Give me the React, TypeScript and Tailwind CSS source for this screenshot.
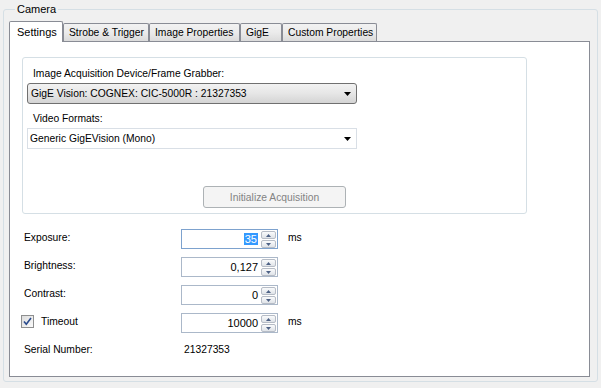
import type { ReactNode } from 'react'

const tabs = ['Settings', 'Strobe & Trigger', 'Image Properties', 'GigE', 'Custom Properties']
const tabWidths = ['w-[54px]', 'w-[86px]', 'w-[91px]', 'w-[42px]', 'w-[95px]']

function Arrow() {
  return (
    <svg width="7" height="4" viewBox="0 0 7 4" className="shrink-0">
      <path d="M0 0h7L3.5 4z" fill="#000" />
    </svg>
  )
}

function Spinner() {
  return (
    <div className="flex flex-col gap-px w-[15px] h-[17px] mt-px mr-px">
      <div className="flex-1 flex items-center justify-center border border-[#b6bcc6] rounded-[2px] bg-gradient-to-b from-[#fafbfc] to-[#dfe3e8]">
        <svg width="5" height="3" viewBox="0 0 5 3">
          <path d="M2.5 0L5 3H0z" fill="#4d6185" />
        </svg>
      </div>
      <div className="flex-1 flex items-center justify-center border border-[#b6bcc6] rounded-[2px] bg-gradient-to-b from-[#fafbfc] to-[#dfe3e8]">
        <svg width="5" height="3" viewBox="0 0 5 3">
          <path d="M0 0h5L2.5 3z" fill="#4d6185" />
        </svg>
      </div>
    </div>
  )
}

function NumBox({ value, focused }: { value: ReactNode; focused?: boolean }) {
  return (
    <div
      className={
        'w-[97px] h-[20px] flex items-start justify-end bg-white border ' +
        (focused ? 'border-[#7da2ce]' : 'border-[#abb8c9]')
      }
    >
      <span className="h-[18px] leading-[18px] pr-[3px] text-[11px]">{value}</span>
      <Spinner />
    </div>
  )
}

function Row({ label, children, unit }: { label: ReactNode; children: ReactNode; unit?: string }) {
  return (
    <div className="flex items-start h-[20px]">
      <div className="w-[157px] pt-[2px]">{label}</div>
      {children}
      {unit && <span className="ml-[10px] pt-[2px]">{unit}</span>}
    </div>
  )
}

export default function App() {
  return (
    <div className="w-[601px] h-[388px] bg-[#f0f0f0] font-['Liberation_Sans',Arial,sans-serif] text-[10.3px] leading-[13px] text-black pt-[2px] pl-[3px] whitespace-nowrap">
      <fieldset className="w-[595px] h-[380px] border border-[#d5dfe5] rounded-[3px] px-[5px]">
        <legend className="ml-[6px] px-[2px] leading-[14px] text-[11px]">Camera</legend>

        <div className="flex items-end h-[20px] mt-[5px]">
          {tabs.map((t, i) =>
            i === 0 ? (
              <div
                key={t}
                className={`${tabWidths[i]} h-[21px] -mb-px relative z-10 bg-white border border-b-0 border-[#898c95] rounded-t-[2px] pl-[7px] pt-[4px] text-[11px]`}
              >
                {t}
              </div>
            ) : (
              <div
                key={t}
                className={`${tabWidths[i]} h-[18px] bg-gradient-to-b from-[#f2f2f2] via-[#ebebeb] to-[#dbdbdb] border border-b-0 border-[#898c95] rounded-t-[2px] pl-[5px] pt-[2px]`}
              >
                {t}
              </div>
            )
          )}
        </div>

        <div className="w-[581px] h-[336px] bg-white border border-[#898c95]">
          <div className="ml-[12px] mt-[15px] w-[505px] h-[157px] border border-[#d5dfe5] rounded-[3px] pl-[4px] pt-[9px]">
            <div className="ml-[6px]">Image Acquisition Device/Frame Grabber:</div>
            <div className="mt-[3px] w-[330px] h-[21px] flex items-center justify-between border border-[#707070] rounded-[3px] bg-gradient-to-b from-[#f2f2f2] via-[#e6e6e6] to-[#d4d4d4] pl-[3px] pr-[5px]">
              <span>GigE Vision: COGNEX: CIC-5000R : 21327353</span>
              <Arrow />
            </div>
            <div className="ml-[6px] mt-[8px]">Video Formats:</div>
            <div className="mt-[3px] w-[330px] h-[21px] flex items-center justify-between border border-[#d9dfe6] bg-white pl-[2px] pr-[5px]">
              <span>Generic GigEVision (Mono)</span>
              <Arrow />
            </div>
            <div className="flex justify-center mt-[37px] pr-[4px]">
              <div className="w-[143px] h-[22px] flex items-center justify-center border border-[#adb2b5] rounded-[3px] bg-[#f4f4f4] text-[#838383]">
                Initialize Acquisition
              </div>
            </div>
          </div>

          <div className="flex flex-col gap-[8px] mt-[15px] pl-[14px]">
            <Row label="Exposure:" unit="ms">
              <NumBox focused value={<span className="bg-[#3399ff] text-white px-px">35</span>} />
            </Row>
            <Row label="Brightness:">
              <NumBox value="0,127" />
            </Row>
            <Row label="Contrast:">
              <NumBox value="0" />
            </Row>
            <div className="flex items-start h-[20px] -ml-[3px]">
              <div className="w-[160px] flex items-center gap-[7px] pt-[2px]">
                <div className="w-[13px] h-[13px] border border-[#8e8f8f] bg-gradient-to-br from-[#dcdcdc] to-[#fbfbfb] flex items-center justify-center">
                  <svg width="9" height="9" viewBox="0 0 9 9">
                    <path d="M1 4.5l2.3 2.8L8 1" fill="none" stroke="#2a4b8d" strokeWidth="1.6" />
                  </svg>
                </div>
                <span>Timeout</span>
              </div>
              <NumBox value="10000" />
              <span className="ml-[10px] pt-[2px]">ms</span>
            </div>
            <Row label="Serial Number:">
              <span className="pt-[2px] pl-[3px]">21327353</span>
            </Row>
          </div>
        </div>
      </fieldset>
    </div>
  )
}
